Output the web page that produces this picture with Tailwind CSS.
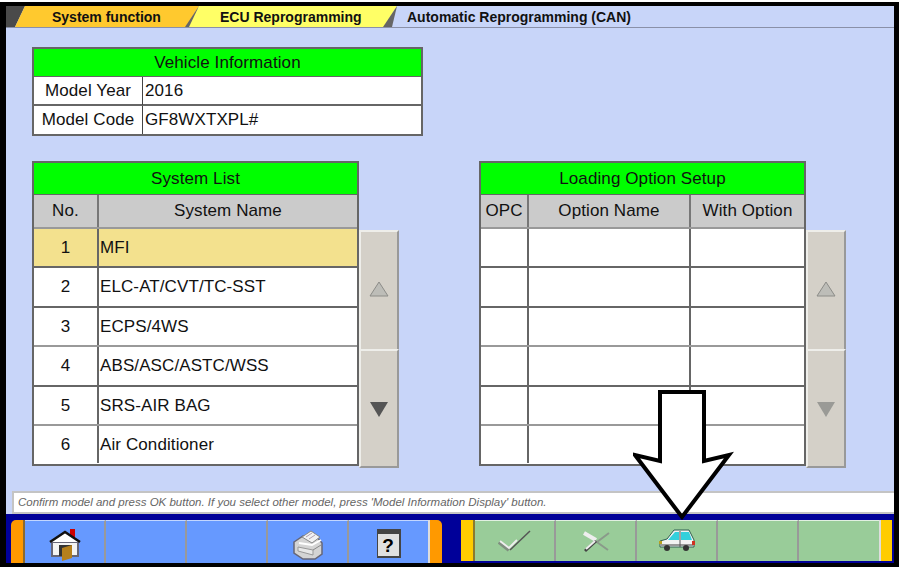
<!DOCTYPE html>
<html lang="en">
<head>
    <meta charset="UTF-8">
    <meta name="viewport" content="width=device-width, initial-scale=1.0">
    <title>Automatic Reprogramming (CAN)</title>
    <script src="https://cdn.jsdelivr.net/npm/@tailwindcss/browser@4"></script>
</head>
<body class="bg-white h-[573px] w-[901px] overflow-hidden font-['Liberation_Sans',Arial,sans-serif] text-[#111]">

    <!-- Black frame -->
    <div class="relative mt-[2px] ml-0 w-[899px] h-[565px] border-[6px] border-t-[4px] border-r-[5px] border-b-[4px] border-black bg-[#c8d5f9] flex flex-col">

        <!-- Tabs -->
        <div class="relative flex h-[22px] items-stretch border-b border-[#8a90a8] text-[14px] font-bold shrink-0">
            <svg class="absolute left-0 top-0" width="400" height="21" viewBox="0 0 400 21">
                <path d="M0 0H19L9 21H0Z" fill="#4a4a4a"/>
                <path d="M19 0H193L180 21H9Z" fill="#ffc92e"/>
                <path d="M188 21H179L193 0Z" fill="#666"/>
                <path d="M193 0H391L378 21H183Z" fill="#ffff66"/>
                <path d="M386 21H377L391 0Z" fill="#666"/>
            </svg>
            <div class="relative pl-[46px] w-[187px] leading-[23px]">System function</div>
            <div class="relative pl-[27px] w-[214px] leading-[23px]">ECU Reprogramming</div>
            <div class="relative leading-[23px]">Automatic Reprogramming (CAN)</div>
        </div>

        <!-- Content -->
        <div class="flex-1 pl-[26px] pt-[19px]">
            <!-- Vehicle info -->
            <div class="w-[391px] border-2 border-[#666] bg-white text-[17px] tracking-[0.1px]">
                <div class="h-[28px] bg-[#00ff00] text-center leading-[27px] border-b border-[#666]">Vehicle Information</div>
                <div class="grid grid-cols-[109px_1fr] h-[29px] leading-[28px] border-b-2 border-[#666]">
                    <div class="text-center border-r border-[#444]">Model Year</div>
                    <div class="pl-[2px]">2016</div>
                </div>
                <div class="grid grid-cols-[109px_1fr] h-[28px] leading-[27px]">
                    <div class="text-center border-r border-[#444]">Model Code</div>
                    <div class="pl-[2px]">GF8WXTXPL#</div>
                </div>
            </div>

            <div class="flex mt-[25px] text-[17px] tracking-[0.1px]">
                <!-- System list -->
                <div class="w-[327px] h-[305px] border-2 border-[#666] bg-white shrink-0">
                    <div class="h-[32px] bg-[#00ff00] text-center leading-[31px] border-b border-[#666]">System List</div>
                    <div class="grid grid-cols-[65px_1fr] h-[34px] bg-[#cbcbcb] leading-[32px] text-center border-b-2 border-[#999]">
                        <div class="border-r-2 border-[#777]">No.</div>
                        <div>System Name</div>
                    </div>
                    <div class="grid grid-cols-[65px_1fr] h-[39px] leading-[37px] bg-[#f3e18e] border-b-2 border-[#666]">
                        <div class="text-center border-r-2 border-[#666]">1</div>
                        <div class="pl-[1px]">MFI</div>
                    </div>
                    <div class="grid grid-cols-[65px_1fr] h-[40px] leading-[37px] border-b-2 border-[#666]">
                        <div class="text-center border-r-2 border-[#666]">2</div>
                        <div class="pl-[1px]">ELC-AT/CVT/TC-SST</div>
                    </div>
                    <div class="grid grid-cols-[65px_1fr] h-[39px] leading-[37px] border-b-2 border-[#999]">
                        <div class="text-center border-r-2 border-[#666]">3</div>
                        <div class="pl-[1px]">ECPS/4WS</div>
                    </div>
                    <div class="grid grid-cols-[65px_1fr] h-[40px] leading-[37px] border-b-2 border-[#666]">
                        <div class="text-center border-r-2 border-[#666]">4</div>
                        <div class="pl-[1px]">ABS/ASC/ASTC/WSS</div>
                    </div>
                    <div class="grid grid-cols-[65px_1fr] h-[39px] leading-[37px] border-b-2 border-[#999]">
                        <div class="text-center border-r-2 border-[#666]">5</div>
                        <div class="pl-[1px]">SRS-AIR BAG</div>
                    </div>
                    <div class="grid grid-cols-[65px_1fr] h-[37px] leading-[37px]">
                        <div class="text-center border-r-2 border-[#666]">6</div>
                        <div class="pl-[1px]">Air Conditioner</div>
                    </div>
                </div>

                <!-- Scroll buttons -->
                <div class="w-[40px] h-[238px] mt-[69px] flex flex-col shrink-0">
                    <div class="h-[119px] pb-[4px] bg-[#d4d0c8] border-t-2 border-l-2 border-[#eeeeea] border-r-2 border-r-[#999] flex items-center justify-center">
                        <svg width="20" height="16" viewBox="0 0 20 16"><path d="M10 1 19 15H1Z" fill="#bdbdb8" stroke="#8c8c88"/></svg>
                    </div>
                    <div class="h-[119px] bg-[#d4d0c8] border-t-2 border-l-2 border-[#eeeeea] border-r-2 border-b-2 border-r-[#999] border-b-[#999] flex items-center justify-center">
                        <svg width="20" height="16" viewBox="0 0 20 16"><path d="M1 1H19L10 16Z" fill="#555"/></svg>
                    </div>
                </div>

                <!-- Loading options -->
                <div class="w-[327px] h-[305px] ml-[80px] border-2 border-[#666] bg-white shrink-0">
                    <div class="h-[32px] bg-[#00ff00] text-center leading-[31px] border-b border-[#666]">Loading Option Setup</div>
                    <div class="grid grid-cols-[48px_162px_1fr] h-[34px] bg-[#cbcbcb] leading-[32px] text-center border-b-2 border-[#999]">
                        <div class="border-r-2 border-[#777]">OPC</div>
                        <div class="border-r-2 border-[#777]">Option Name</div>
                        <div>With Option</div>
                    </div>
                    <div class="grid grid-cols-[48px_162px_1fr] h-[39px] border-b-2 border-[#666]"><div class="border-r-2 border-[#666]"></div><div class="border-r-2 border-[#666]"></div><div></div></div>
                    <div class="grid grid-cols-[48px_162px_1fr] h-[40px] border-b-2 border-[#666]"><div class="border-r-2 border-[#666]"></div><div class="border-r-2 border-[#666]"></div><div></div></div>
                    <div class="grid grid-cols-[48px_162px_1fr] h-[39px] border-b-2 border-[#999]"><div class="border-r-2 border-[#666]"></div><div class="border-r-2 border-[#666]"></div><div></div></div>
                    <div class="grid grid-cols-[48px_162px_1fr] h-[40px] border-b-2 border-[#666]"><div class="border-r-2 border-[#666]"></div><div class="border-r-2 border-[#666]"></div><div></div></div>
                    <div class="grid grid-cols-[48px_162px_1fr] h-[39px] border-b-2 border-[#999]"><div class="border-r-2 border-[#666]"></div><div class="border-r-2 border-[#666]"></div><div></div></div>
                    <div class="grid grid-cols-[48px_162px_1fr] h-[37px]"><div class="border-r-2 border-[#666]"></div><div class="border-r-2 border-[#666]"></div><div></div></div>
                </div>

                <div class="w-[40px] h-[238px] mt-[69px] flex flex-col shrink-0">
                    <div class="h-[119px] pb-[4px] bg-[#d4d0c8] border-t-2 border-l-2 border-[#eeeeea] border-r-2 border-r-[#999] flex items-center justify-center">
                        <svg width="20" height="16" viewBox="0 0 20 16"><path d="M10 1 19 15H1Z" fill="#bdbdb8" stroke="#8c8c88"/></svg>
                    </div>
                    <div class="h-[119px] bg-[#d4d0c8] border-t-2 border-l-2 border-[#eeeeea] border-r-2 border-b-2 border-r-[#999] border-b-[#999] flex items-center justify-center">
                        <svg width="20" height="16" viewBox="0 0 20 16"><path d="M1 1H19L10 16Z" fill="#9a9a96"/></svg>
                    </div>
                </div>
            </div>
        </div>

        <!-- Message bar -->
        <div class="h-[23px] ml-[6px] bg-white border-t-2 border-b-2 border-l-2 border-[#c4c4c4] text-[11.5px] italic text-[#666] pl-[4px] leading-[18px] shrink-0">Confirm model and press OK button. If you select other model, press 'Model Information Display' button.</div>

        <!-- Toolbar -->
        <div class="h-[49px] bg-[#000099] flex pt-[6px] shrink-0">
            <div class="flex ml-[5px] h-[43px]">
                <div class="w-[14px] bg-[#ff9900] rounded-tl-[5px] border-r-2 border-[#8a6a30]"></div>
                <div class="w-[81px] bg-[#6699ff] border-t border-r-2 border-white/60 border-r-[#999] flex justify-center pt-[8px]">
                    <svg width="32" height="32" viewBox="0 0 32 32">
                        <path d="M21 0H26V10H21Z" fill="#c00"/>
                        <path d="M3 13V27H29V13Z" fill="#f4f4f4" stroke="#667" stroke-width="2"/>
                        <path d="M1 13 16 3 31 13" fill="#fff" stroke="#111" stroke-width="2.5"/>
                        <path d="M16 5 5 13H27Z" fill="#fff"/>
                        <path d="M10 16H23V27H10Z" fill="#333"/>
                        <path d="M13 19 23 16V29L13 32Z" fill="#b5801d"/>
                    </svg>
                </div>
                <div class="w-[81px] bg-[#6699ff] border-t border-r-2 border-white/60 border-r-[#999]"></div>
                <div class="w-[81px] bg-[#6699ff] border-t border-r-2 border-white/60 border-r-[#999]"></div>
                <div class="w-[81px] bg-[#6699ff] border-t border-r-2 border-white/60 border-r-[#999] flex justify-center pt-[9px]">
                    <svg width="32" height="30" viewBox="0 0 32 30">
                        <path d="M2 12 11 6H24L30 13V24L23 29H11L2 23Z" fill="#d4d4d4" stroke="#667" stroke-width="1.5"/>
                        <path d="M10 7 19 1 28 7 20 13Z" fill="#f2f2f2" stroke="#888"/>
                        <path d="M14 7 20 3M17 9 23 5" stroke="#b0a0b0"/>
                        <path d="M7 13 20 15 29 10" fill="none" stroke="#fff" stroke-width="2"/>
                        <path d="M6 17 21 20V25L6 21Z" fill="#e8e8e8" stroke="#999"/>
                        <path d="M21 20 29 15" stroke="#888"/>
                    </svg>
                </div>
                <div class="w-[79px] bg-[#6699ff] border-t border-white/60 flex justify-center pt-[8px]">
                    <div class="w-[24px] h-[29px] bg-[#e0e0e0] border border-r-2 border-b-2 border-[#444] border-t-[5px] text-center font-bold text-[19px] leading-[23px] text-black">?</div>
                </div>
                <div class="w-[14px] bg-[#ff9900] rounded-tr-[5px] border-l-2 border-[#ddd]"></div>
            </div>

            <div class="flex ml-[19px] h-[41px]">
                <div class="w-[14px] bg-[#ffcc00] border-r-2 border-[#8a7a30]"></div>
                <div class="w-[81px] bg-[#99cc99] border-t border-r-2 border-white/70 border-r-[#999] flex items-center justify-center">
                    <svg width="34" height="24" viewBox="0 0 34 24">
                        <path d="M12 21 32 2" stroke="#555" stroke-width="1.5"/>
                        <path d="M1 13 11 21" stroke="#7f8f7f" stroke-width="4"/>
                        <path d="M2 12 11 19 19 11" fill="none" stroke="#eee" stroke-width="2"/>
                    </svg>
                </div>
                <div class="w-[81px] bg-[#99cc99] border-t border-r-2 border-white/70 border-r-[#999] flex items-center justify-center">
                    <svg width="28" height="24" viewBox="0 0 28 24">
                        <path d="M12 11 26 21" stroke="#8a9a8a" stroke-width="2"/>
                        <path d="M15 13 27 4" stroke="#8a9a8a" stroke-width="2"/>
                        <path d="M2 4 14 11" stroke="#eee" stroke-width="4"/>
                        <path d="M3 22 14 12" stroke="#444" stroke-width="3"/>
                        <path d="M4 20 13 12" stroke="#eee" stroke-width="2"/>
                    </svg>
                </div>
                <div class="w-[81px] bg-[#99cc99] border-t border-r-2 border-white/70 border-r-[#999] flex justify-center pt-[8px]">
                    <svg width="38" height="23" viewBox="0 0 38 23">
                        <path d="M2 12 9 10 16 1H31L36 11V18H2Z" fill="#f2f2f2" stroke="#2f5f50"/>
                        <path d="M10 11 17 3H21V11Z" fill="#33d0dc"/>
                        <path d="M23 3H31L34 11H23Z" fill="#33d0dc"/>
                        <path d="M2 16H36" stroke="#999" stroke-width="2"/>
                        <path d="M22 2V18" stroke="#555"/>
                        <path d="M1 12H4V15H1Z" fill="#b8a020"/>
                        <path d="M34 12H37V16H34Z" fill="#d03020"/>
                        <circle cx="9" cy="19" r="3" fill="#333"/>
                        <circle cx="28" cy="19" r="3" fill="#333"/>
                    </svg>
                </div>
                <div class="w-[81px] bg-[#99cc99] border-t border-r-2 border-white/70 border-r-[#999]"></div>
                <div class="w-[80px] bg-[#99cc99] border-t border-white/70"></div>
                <div class="w-[13px] bg-[#ffcc00] border-l-2 border-[#ddd]"></div>
            </div>
        </div>

        <!-- Callout arrow over the toolbar -->
        <svg class="absolute left-[627px] top-[384px]" width="102" height="134" viewBox="0 0 102 134">
            <path d="M27 2H71V71L96 65 49 127 2 65 27 71Z" fill="#fff" stroke="#000" stroke-width="4"/>
        </svg>
    </div>

</body>
</html>
